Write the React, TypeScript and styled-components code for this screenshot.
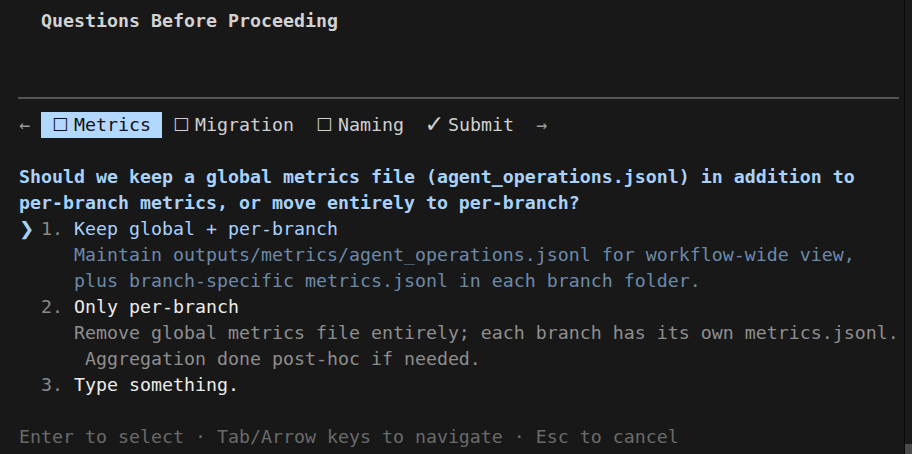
import React from "react";
import styled, { createGlobalStyle } from "styled-components";

const GlobalStyle = createGlobalStyle`
  html, body {
    margin: 0;
    padding: 0;
    background: #181818;
  }
  #root {
    height: 100vh;
  }
`;

const Screen = styled.div`
  display: flex;
  height: 454px;
  overflow: hidden;
  background: #181818;
`;

const Terminal = styled.div`
  flex: 1;
  padding: 8px 0 0 19px;
  font-family: "DejaVu Sans Mono", "DejaVu Sans", monospace;
  font-size: 18.27px;
  line-height: 26px;
  white-space: pre;
  color: #cccccc;
`;

type Tone = "title" | "question" | "footer" | "plain";

const toneColor: Record<Tone, string> = {
  title: "#d2d2d2",
  question: "#a9d2fb",
  footer: "#6a6a6a",
  plain: "#cccccc",
};

const Line = styled.div<{ $tone?: Tone; $bold?: boolean }>`
  height: 26px;
  color: ${(p) => toneColor[p.$tone ?? "plain"]};
  font-weight: ${(p) => (p.$bold ? 700 : 400)};
`;

const RuleRow = styled.div`
  height: 26px;
  display: flex;
  align-items: center;
  margin-left: -1px;
  margin-right: 5px;
  margin-top: -1px;
  margin-bottom: 1px;
`;

const RuleLine = styled.div`
  flex: 1;
  height: 2px;
  background: #555555;
`;

const Arrow = styled.span`
  color: #9c9c9c;
`;

const Tab = styled.span<{ $active?: boolean }>`
  display: inline-block;
  background: ${(p) => (p.$active ? "#b2d8ff" : "transparent")};
  color: ${(p) => (p.$active ? "#111111" : "#d0d0d0")};
`;

const Glyph = styled.span<{ $scale?: number }>`
  display: inline-block;
  width: 22px;
  font-family: "DejaVu Sans", "DejaVu Sans Mono", sans-serif;
  transform: scale(${(p) => p.$scale ?? 1});
  transform-origin: 5px 60%;
`;

const Pointer = styled.span`
  color: #a9d2fb;
  display: inline-block;
  width: 11px;
  font-family: "DejaVu Sans", "DejaVu Sans Mono", sans-serif;
`;

const Num = styled.span`
  color: #8a8a8a;
`;

const Label = styled.span<{ $selected?: boolean }>`
  color: ${(p) => (p.$selected ? "#a9d2fb" : "#ececec")};
`;

const Desc = styled.div<{ $selected?: boolean }>`
  height: 26px;
  color: ${(p) => (p.$selected ? "#6c8aa8" : "#8e8e8e")};
`;

const Scrollbar = styled.div`
  width: 7px;
  border-left: 1px solid #0a0a0a;
  background: #1a1a1a;
  display: flex;
  flex-direction: column;
  justify-content: flex-end;
`;

const Thumb = styled.div`
  height: 10px;
  background: #4a4a4a;
`;

const tabs = [
  { label: "Metrics", glyph: "☐", active: true },
  { label: "Migration", glyph: "☐" },
  { label: "Naming", glyph: "☐" },
  { label: "Submit", glyph: "✓", scale: 1.3 },
];

const options = [
  {
    n: "1.",
    label: "Keep global + per-branch",
    selected: true,
    desc: [
      "Maintain outputs/metrics/agent_operations.jsonl for workflow-wide view,",
      "plus branch-specific metrics.jsonl in each branch folder.",
    ],
  },
  {
    n: "2.",
    label: "Only per-branch",
    desc: [
      "Remove global metrics file entirely; each branch has its own metrics.jsonl.",
      " Aggregation done post-hoc if needed.",
    ],
  },
  { n: "3.", label: "Type something.", desc: [] },
];

export default function App() {
  return (
    <>
      <GlobalStyle />
      <Screen>
        <Terminal>
          <Line $tone="title" $bold>
            {"  Questions Before Proceeding"}
          </Line>
          <Line />
          <Line />
          <RuleRow>
            <RuleLine />
          </RuleRow>
          <Line>
            <Arrow>{"← "}</Arrow>
            {tabs.map((t) => (
              <Tab key={t.label} $active={t.active}>
                {" "}
                <Glyph $scale={t.scale}>{t.glyph}</Glyph>
                {t.label + " "}
              </Tab>
            ))}
            <Arrow>{" →"}</Arrow>
          </Line>
          <Line />
          <Line $tone="question" $bold>
            Should we keep a global metrics file (agent_operations.jsonl) in addition to
          </Line>
          <Line $tone="question" $bold>
            per-branch metrics, or move entirely to per-branch?
          </Line>
          {options.map((o) => (
            <React.Fragment key={o.n}>
              <Line>
                {o.selected ? <Pointer>❯</Pointer> : " "}
                {" "}
                <Num>{o.n}</Num>
                {" "}
                <Label $selected={o.selected}>{o.label}</Label>
              </Line>
              {o.desc.map((d) => (
                <Desc key={d} $selected={o.selected}>
                  {"     " + d}
                </Desc>
              ))}
            </React.Fragment>
          ))}
          <Line />
          <Line $tone="footer">
            Enter to select · Tab/Arrow keys to navigate · Esc to cancel
          </Line>
        </Terminal>
        <Scrollbar>
          <Thumb />
        </Scrollbar>
      </Screen>
    </>
  );
}
